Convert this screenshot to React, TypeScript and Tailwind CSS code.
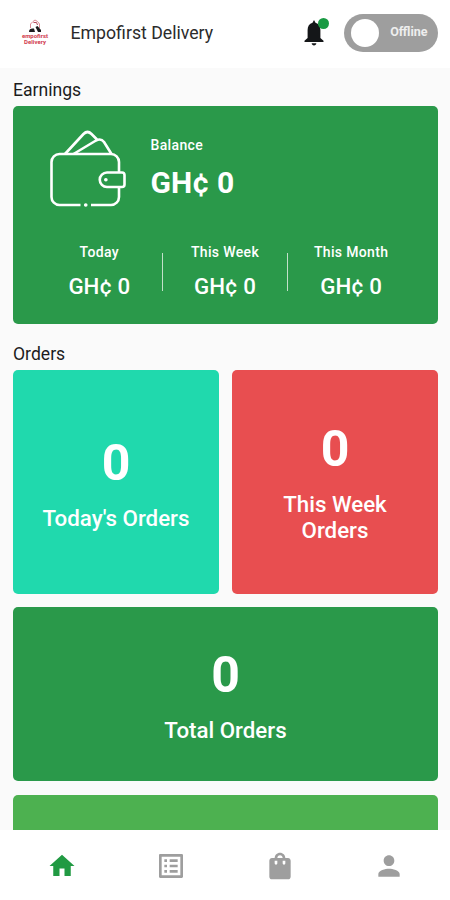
import React from "react";

const navIcons = [
  { name: "Home", d: "M10 20v-6h4v6h5v-8h3L12 3 2 12h3v8z", active: true },
  {
    name: "List",
    d: "M19 5v14H5V5h14m1.1-2H3.9c-.5 0-.9.4-.9.9v16.2c0 .4.4.9.9.9h16.2c.4 0 .9-.5.9-.9V3.9c0-.5-.5-.9-.9-.9zM11 7h6v2h-6V7zm0 4h6v2h-6v-2zm0 4h6v2h-6v-2zM7 7h2v2H7V7zm0 4h2v2H7v-2zm0 4h2v2H7v-2z",
    active: false,
  },
  {
    name: "Orders",
    d: "M18 6h-2c0-2.21-1.79-4-4-4S8 3.79 8 6H6c-1.1 0-2 .9-2 2v12c0 1.1.9 2 2 2h12c1.1 0 2-.9 2-2V8c0-1.1-.9-2-2-2zm-8 4c0 .55-.45 1-1 1s-1-.45-1-1V8h2v2zm2-6c1.1 0 2 .9 2 2h-4c0-1.1.9-2 2-2zm4 6c0 .55-.45 1-1 1s-1-.45-1-1V8h2v2z",
    active: false,
  },
  {
    name: "Profile",
    d: "M12 12c2.21 0 4-1.79 4-4s-1.79-4-4-4-4 1.79-4 4 1.79 4 4 4zm0 2c-2.67 0-8 1.34-8 4v2h16v-2c0-2.66-5.33-4-8-4z",
    active: false,
  },
];

const periods = ["Today", "This Week", "This Month"];

function Logo() {
  return (
    <div className="flex h-[27px] w-[28px] flex-col items-center text-[#d13a4d]">
      <svg width="16" height="14" viewBox="0 0 16 14" fill="none" className="shrink-0">
        <path d="M3.500 9V5L6 2.500 8 1l2.500 1.500L12.500 5v4" stroke="#d98a94" strokeWidth="1" />
        <path d="M6.500 3.500h3l1 2.500" stroke="#b4495a" strokeWidth="1" />
        <path d="M2 13c0-3 2-4 5-3.500L8 13zM8.500 8l2-1 3.500 4v2h-3z" fill="#1c1c1e" />
      </svg>
      <span className="text-[6px] font-bold leading-[6px]">empofirst</span>
      <span className="text-[6px] font-bold leading-[6px]">Delivery</span>
    </div>
  );
}

function Bell() {
  return (
    <div className="relative h-[30px] w-[26px]">
      <svg width="26" height="30" viewBox="0 0 26 30" fill="#141618">
        <path d="M11.500 4.800 13 2l1.500 2.800c3.200.8 4.900 3.600 4.900 7.200v8l3.100 2.700v1.300H3.500v-1.300l3.100-2.700v-8c0-3.600 1.700-6.400 4.900-7.200z" />
        <path d="M10.700 25.300h4.600c0 1.300-1 2.200-2.300 2.200s-2.300-.9-2.300-2.200z" />
      </svg>
      <span className="absolute left-[17px] top-0 size-[11px] rounded-full bg-[#199a43]" />
    </div>
  );
}

function Wallet() {
  return (
    <svg width="78" height="80" viewBox="0 0 78 80" fill="none" stroke="#fff" strokeWidth="2.6" strokeLinecap="butt" strokeLinejoin="round">
      <path d="M31.500 76H10.500a8 8 0 0 1-8-8V33a8 8 0 0 1 8-8h51.500a8 8 0 0 1 8 8v10.500M70 58v10a8 8 0 0 1-8 8H42" />
      <path d="M16 25 34.500 5q4-4 8 0L48 10.500M24.500 25 47 11.500q5-2.500 8 1.500L62.500 25" />
      <path d="M58 43.500h15a2.500 2.500 0 0 1 2.500 2.500v9.500a2.500 2.500 0 0 1-2.500 2.500H58a7.250 7.250 0 0 1 0-14.500z" />
      <path d="M56.800 50.700h.1M36.700 76h.1" strokeWidth="3.600" strokeLinecap="round" />
    </svg>
  );
}

export default function App() {
  return (
    <div className="flex h-[900px] w-[450px] flex-col overflow-hidden bg-[#fafafa] font-[Roboto,sans-serif]">
      <header className="flex h-[68px] shrink-0 items-center bg-white pb-[3px] pl-[21px] pr-3">
        <Logo />
        <h1 className="ml-[21.5px] flex-1 text-[17.7px] leading-5 text-[#2b2b2b]">Empofirst Delivery</h1>
        <Bell />
        <div className="ml-[17px] flex h-[38px] w-[94px] items-center justify-between rounded-full bg-[#9e9e9e] pl-[7px] pr-[10.5px]">
          <span className="size-[28px] rounded-full bg-white" />
          <span className="mt-[-1px] text-[12.5px] font-bold leading-4 text-[#eeeeee]">Offline</span>
        </div>
      </header>

      <main className="flex min-h-0 flex-1 flex-col overflow-hidden pl-[13px] pr-[12px]">
        <h2 className="mt-3 h-[26px] shrink-0 text-[17.6px] leading-5 text-[#1c1c1c]">Earnings</h2>
        <section className="flex h-[218px] shrink-0 flex-col rounded-[5px] bg-[#2a994a] text-white">
          <div className="flex pl-[36px] pt-[23px]">
            <Wallet />
            <div className="ml-[23.5px] pt-2">
              <div className="text-[14px] font-medium leading-4 tracking-[0.35px]">Balance</div>
              <div className="mt-3 text-[30px] font-bold leading-[36px]">GH¢ 0</div>
            </div>
          </div>
          <div className="mt-[35px] grid grid-cols-3 px-[24px]">
            {periods.map((period, i) => (
              <div key={period} className="flex items-center">
                <div className="flex-1 text-center">
                  <div className="text-[14px] font-medium leading-4 tracking-[0.35px]">{period}</div>
                  <div className="mt-[13px] text-[22.3px] font-medium leading-[26px]">GH¢ 0</div>
                </div>
                {i < 2 && <span className="h-[38px] w-px bg-[#c3e0ca]" />}
              </div>
            ))}
          </div>
        </section>

        <h2 className="mt-[19.5px] h-[26.5px] shrink-0 text-[17.6px] leading-5 text-[#1c1c1c]">Orders</h2>
        <div className="grid h-[224px] shrink-0 grid-cols-2 gap-[13px] text-center text-white">
          <section className="flex flex-col items-center justify-center rounded-[5px] bg-[#20d9ad]">
            <div className="text-[50px] font-bold leading-[58px]">0</div>
            <div className="mt-[13px] text-[22.3px] font-medium leading-[26px]">Today's Orders</div>
          </section>
          <section className="flex flex-col items-center justify-center rounded-[5px] bg-[#e84e50] pb-px">
            <div className="text-[50px] font-bold leading-[58px]">0</div>
            <div className="mt-[13px] w-[130px] text-[22.3px] font-medium leading-[26px]">This Week Orders</div>
          </section>
        </div>
        <section className="mt-[13px] flex h-[174px] shrink-0 flex-col items-center justify-center rounded-[5px] bg-[#2a994a] text-white">
          <div className="text-[50px] font-bold leading-[58px]">0</div>
          <div className="mt-[13px] text-[22.3px] font-medium leading-[26px]">Total Orders</div>
        </section>
        <section className="mt-[14px] h-[174px] shrink-0 rounded-[5px] bg-[#4db150]" />
      </main>

      <nav className="grid h-[70px] shrink-0 grid-cols-4 bg-white px-[7px] pt-5">
        {navIcons.map((icon) => (
          <button key={icon.name} aria-label={icon.name} className={icon.active ? "flex h-8 items-center justify-center text-[#219a43]" : "flex h-8 items-center justify-center text-[#9e9e9e]"}>
            <svg className={icon.active ? "size-[30px]" : "size-8"} viewBox="0 0 24 24" fill="currentColor">
              <path d={icon.d} />
            </svg>
          </button>
        ))}
      </nav>
    </div>
  );
}
